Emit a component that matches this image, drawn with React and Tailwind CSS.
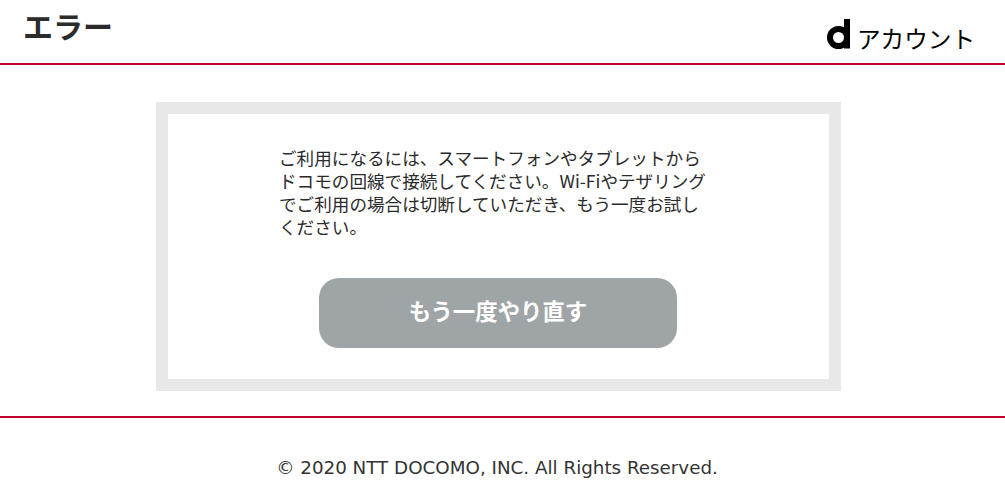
export default function App() {
  return (
    <div className="min-h-[498px] bg-white text-[#2b2b2b] font-['Noto_Sans_CJK_JP','Noto_Sans',sans-serif]">
      {/* Header */}
      <header className="h-[65px] flex justify-between border-b-2 border-[#c3002f] pl-[23px] pr-[30px]">
        <h1 className="text-[30px] leading-[50px] font-bold">エラー</h1>
        <div className="flex items-start gap-[6px] pt-[19px] text-black">
          <svg width="24" height="30" viewBox="0 0 24 30" aria-hidden="true">
            <circle cx="11.5" cy="18.5" r="8.5" fill="none" stroke="#000" strokeWidth="6" />
            <rect x="17" y="0" width="6" height="29.5" fill="#000" />
          </svg>
          <span className="text-[23.6px] leading-8 mt-[3px]">アカウント</span>
        </div>
      </header>

      {/* Main panel */}
      <main className="pt-[37px] pb-[25px] pr-[8px] flex justify-center border-b-2 border-[#c3002f]">
        <div className="w-[685px] h-[289px] border-[12px] border-[#e8e8e8] flex flex-col items-start">
          <p className="w-[432px] mt-[32px] ml-[111px] text-[17.6px] leading-[23px]">
            ご利用になるには、スマートフォンやタブレットから
            ドコモの回線で接続してください。Wi-Fiやテザリング
            でご利用の場合は切断していただき、もう一度お試しください。
          </p>
          <button type="button" className="mt-[40px] ml-[151px] w-[358px] h-[70px] pb-[4px] rounded-[20px] bg-[#9fa4a7] text-white text-[22.4px] font-bold">
            もう一度やり直す
          </button>
        </div>
      </main>

      {/* Footer */}
      <footer className="pt-[37px] pr-[11px] text-center text-[18.3px] leading-[26px] text-[#333] font-['DejaVu_Sans',sans-serif]">
        © 2020 NTT DOCOMO, INC. All Rights Reserved.
      </footer>
    </div>
  );
}
